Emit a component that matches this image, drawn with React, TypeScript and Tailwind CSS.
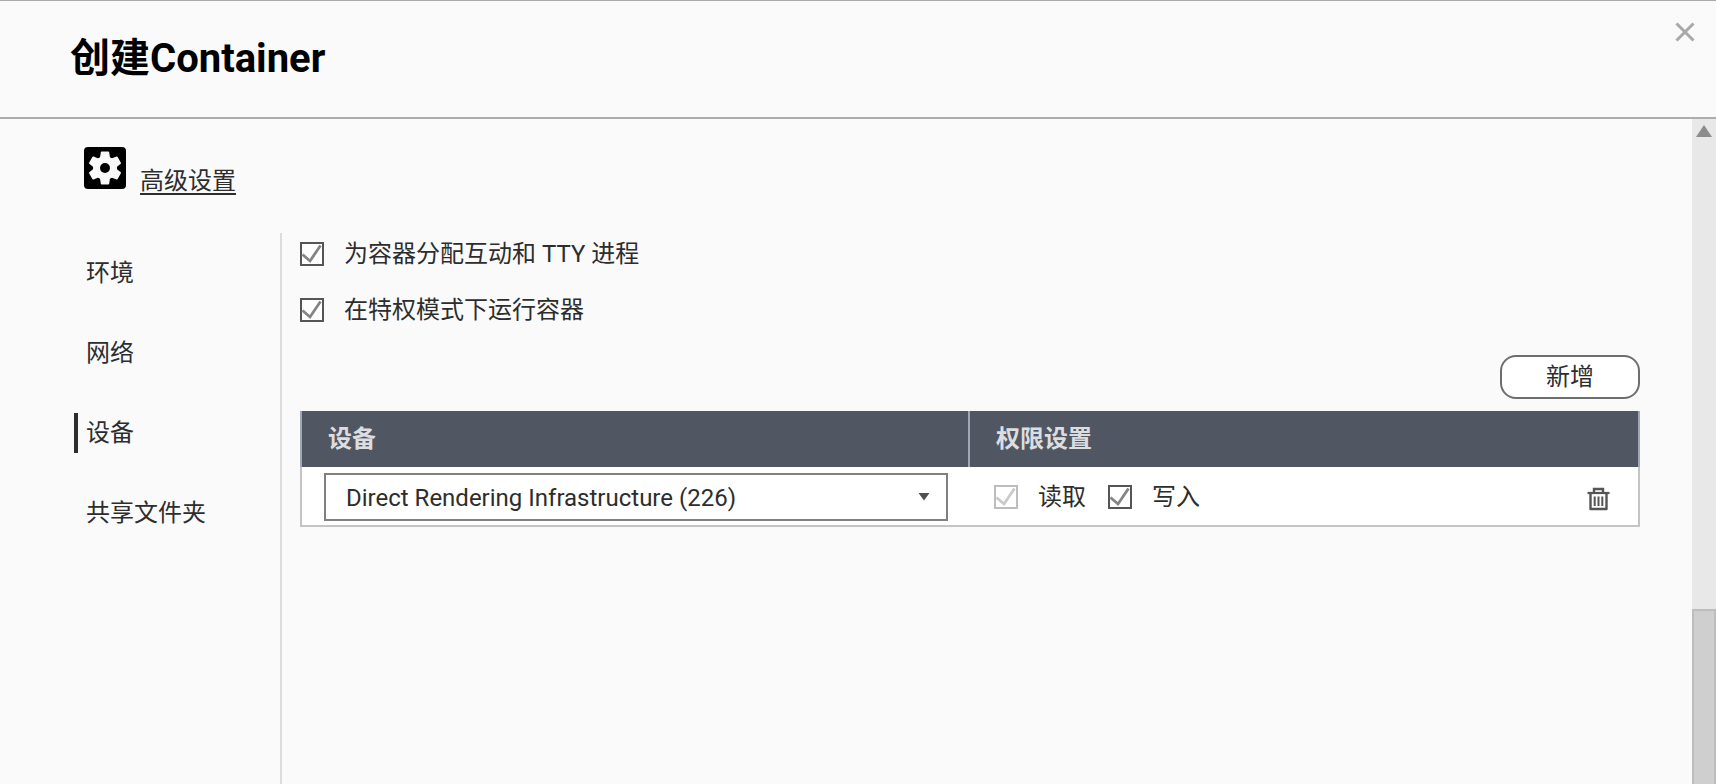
import { useState } from "react";
import clsx from "clsx";

type Device = {
  id: number;
  name: string;
  read: boolean;
  write: boolean;
};

const TABS = ["环境", "网络", "设备", "共享文件夹"];

const DEVICE_OPTIONS = ["Direct Rendering Infrastructure (226)"];

type CheckBoxProps = {
  id: string;
  label: string;
  checked: boolean;
  disabled?: boolean;
  onChange?: (checked: boolean) => void;
};

function CheckBox({ id, label, checked, disabled, onChange }: CheckBoxProps) {
  return (
    <div className="flex items-center gap-5">
      <span className="grid size-6 shrink-0">
        <input
          id={id}
          type="checkbox"
          checked={checked}
          disabled={disabled}
          onChange={(e) => onChange?.(e.target.checked)}
          className="col-start-1 row-start-1 size-6 appearance-none border-2 border-[#555] bg-white disabled:border-[#bdbdbd]"
        />
        {checked && (
          <svg
            viewBox="0 0 24 24"
            fill="none"
            strokeWidth="2.8"
            className={clsx(
              "pointer-events-none col-start-1 row-start-1 size-6",
              disabled ? "stroke-[#cacaca]" : "stroke-[#858585]"
            )}
          >
            <path d="M2.5 12.5 L10 19 L20.5 3.5" />
          </svg>
        )}
      </span>
      <label htmlFor={id}>{label}</label>
    </div>
  );
}

function GearIcon() {
  return (
    <svg viewBox="0 0 42 42" className="size-[42px]">
      <rect width="42" height="42" rx="4" fill="#000" />
      <g
        transform="translate(21 21)"
        fill="#fafafa"
        stroke="#fafafa"
        strokeLinejoin="round"
      >
        <circle r="11.5" />
        {[0, 60, 120, 180, 240, 300].map((deg) => (
          <path
            key={deg}
            d="M-4.4 -9 L-3.4 -15.6 H3.4 L4.4 -9 Z"
            strokeWidth="1.6"
            transform={`rotate(${deg})`}
          />
        ))}
        <circle r="5" fill="#000" stroke="none" />
      </g>
    </svg>
  );
}

function TrashIcon() {
  return (
    <svg viewBox="0 0 24 24" fill="none" stroke="#555" className="size-6">
      <path d="M1.5 6 H23.5" strokeWidth="2.2" />
      <path d="M8 6 V2 H17 V6" strokeWidth="2.4" />
      <path d="M4.5 7 V22 H20.5 V7" strokeWidth="2.4" strokeLinejoin="round" />
      <path d="M8.7 9.5 V19 M12.5 9.5 V19 M16.3 9.5 V19" strokeWidth="2" />
    </svg>
  );
}

export default function App() {
  const [activeTab, setActiveTab] = useState("设备");
  const [tty, setTty] = useState(true);
  const [privileged, setPrivileged] = useState(true);
  const [devices, setDevices] = useState<Device[]>([
    { id: 1, name: DEVICE_OPTIONS[0], read: true, write: true },
  ]);

  const handleAdd = () => {
    setDevices([
      ...devices,
      { id: Date.now(), name: DEVICE_OPTIONS[0], read: true, write: true },
    ]);
  };

  const updateDevice = (id: number, patch: Partial<Device>) => {
    setDevices(devices.map((d) => (d.id === id ? { ...d, ...patch } : d)));
  };

  return (
    <div className="flex min-h-screen flex-col border-t border-[#aaa] bg-[#fafafa] font-[Roboto,'Noto_Sans_CJK_SC',sans-serif] text-2xl text-[#2d2d2d]">
      <header className="flex items-start justify-between border-b-2 border-[#adadad] pt-5 pr-5 pb-[30px] pl-[70px]">
        <h1 className="pt-2.5 text-[40px] leading-14 font-bold text-black">
          创建Container
        </h1>
        <button type="button" aria-label="关闭">
          <svg viewBox="0 0 22 22" className="size-[22px]">
            <path
              d="M2.5 2.5 L19.5 19.5 M19.5 2.5 L2.5 19.5"
              stroke="#a8a8a8"
              strokeWidth="3"
            />
          </svg>
        </button>
      </header>

      <div className="flex flex-1">
        <main className="flex flex-1 flex-col pt-7 pr-13">
          <div className="flex items-start gap-3.5 pl-[84px]">
            <GearIcon />
            <a
              href="#advanced"
              className="pt-4 leading-9 underline decoration-2 underline-offset-4"
            >
              高级设置
            </a>
          </div>

          <div className="mt-[34px] flex flex-1">
            <nav className="w-[282px] shrink-0 border-r-2 border-[#dcdcdc] pt-5 pl-[74px]">
              <ul className="flex flex-col gap-10">
                {TABS.map((tab) => (
                  <li key={tab}>
                    <button
                      type="button"
                      onClick={() => setActiveTab(tab)}
                      className={clsx(
                        "block h-10 border-l-4 pl-2 leading-10",
                        tab === activeTab
                          ? "border-[#2d2d2d]"
                          : "border-transparent"
                      )}
                    >
                      {tab}
                    </button>
                  </li>
                ))}
              </ul>
            </nav>

            <section className="flex-1 pt-[3px] pl-[18px]">
              <div className="flex flex-col gap-5 leading-9">
                <CheckBox
                  id="tty"
                  label="为容器分配互动和 TTY 进程"
                  checked={tty}
                  onChange={setTty}
                />
                <CheckBox
                  id="privileged"
                  label="在特权模式下运行容器"
                  checked={privileged}
                  onChange={setPrivileged}
                />
              </div>

              <div className="mt-[27px] flex justify-end">
                <button
                  type="button"
                  onClick={handleAdd}
                  className="h-11 w-35 rounded-2xl border-2 border-[#6e6e6e] bg-white leading-9"
                >
                  新增
                </button>
              </div>

              <table className="mt-3 w-full table-fixed border-separate border-spacing-0">
                <thead className="bg-[#515762] text-left text-[#dcdde0]">
                  <tr className="h-14">
                    <th className="border-x-2 border-[#a0a8b8] px-[26px] font-bold">
                      设备
                    </th>
                    <th className="border-r-2 border-[#a0a8b8] px-[26px] font-bold">
                      权限设置
                    </th>
                  </tr>
                </thead>
                <tbody className="bg-white">
                  {devices.map((device) => (
                    <tr key={device.id} className="h-15">
                      <td className="border-b-2 border-l-2 border-[#c4c4c4] px-[22px] pt-0.5">
                        <div className="grid items-center">
                          <select
                            aria-label="设备"
                            value={device.name}
                            onChange={(e) =>
                              updateDevice(device.id, { name: e.target.value })
                            }
                            className="col-start-1 row-start-1 h-12 w-full appearance-none border-2 border-[#808080] bg-white pt-0.5 pl-5 text-[#2d2d2d]"
                          >
                            {DEVICE_OPTIONS.map((option) => (
                              <option key={option}>{option}</option>
                            ))}
                          </select>
                          <svg
                            viewBox="0 0 12 8"
                            className="pointer-events-none col-start-1 row-start-1 mr-[18px] h-2 w-3 justify-self-end"
                          >
                            <path d="M0.5 0 H11.5 L6 7.5 Z" fill="#505050" />
                          </svg>
                        </div>
                      </td>
                      <td className="border-r-2 border-b-2 border-[#c4c4c4] pt-0.5 pr-7 pl-6">
                        <div className="flex items-center gap-[22px]">
                          <CheckBox
                            id={`read-${device.id}`}
                            label="读取"
                            checked={device.read}
                            disabled
                          />
                          <CheckBox
                            id={`write-${device.id}`}
                            label="写入"
                            checked={device.write}
                            onChange={(write) =>
                              updateDevice(device.id, { write })
                            }
                          />
                          <button
                            type="button"
                            aria-label="删除"
                            className="ml-auto pt-1"
                            onClick={() =>
                              setDevices(
                                devices.filter((d) => d.id !== device.id)
                              )
                            }
                          >
                            <TrashIcon />
                          </button>
                        </div>
                      </td>
                    </tr>
                  ))}
                </tbody>
              </table>
            </section>
          </div>
        </main>

        {/* scroll bar */}
        <div className="flex w-6 flex-col bg-[#e8e8e8]">
          <div className="flex-14 pt-1.5 pl-1">
            <svg viewBox="0 0 16 12" className="h-3 w-4">
              <path d="M8 0 L16 12 H0 Z" fill="#8c8c8c" />
            </svg>
          </div>
          <div className="flex-5 border-2 border-b-0 border-[#bdbdbd] bg-[#cfcfcf]" />
        </div>
      </div>
    </div>
  );
}
